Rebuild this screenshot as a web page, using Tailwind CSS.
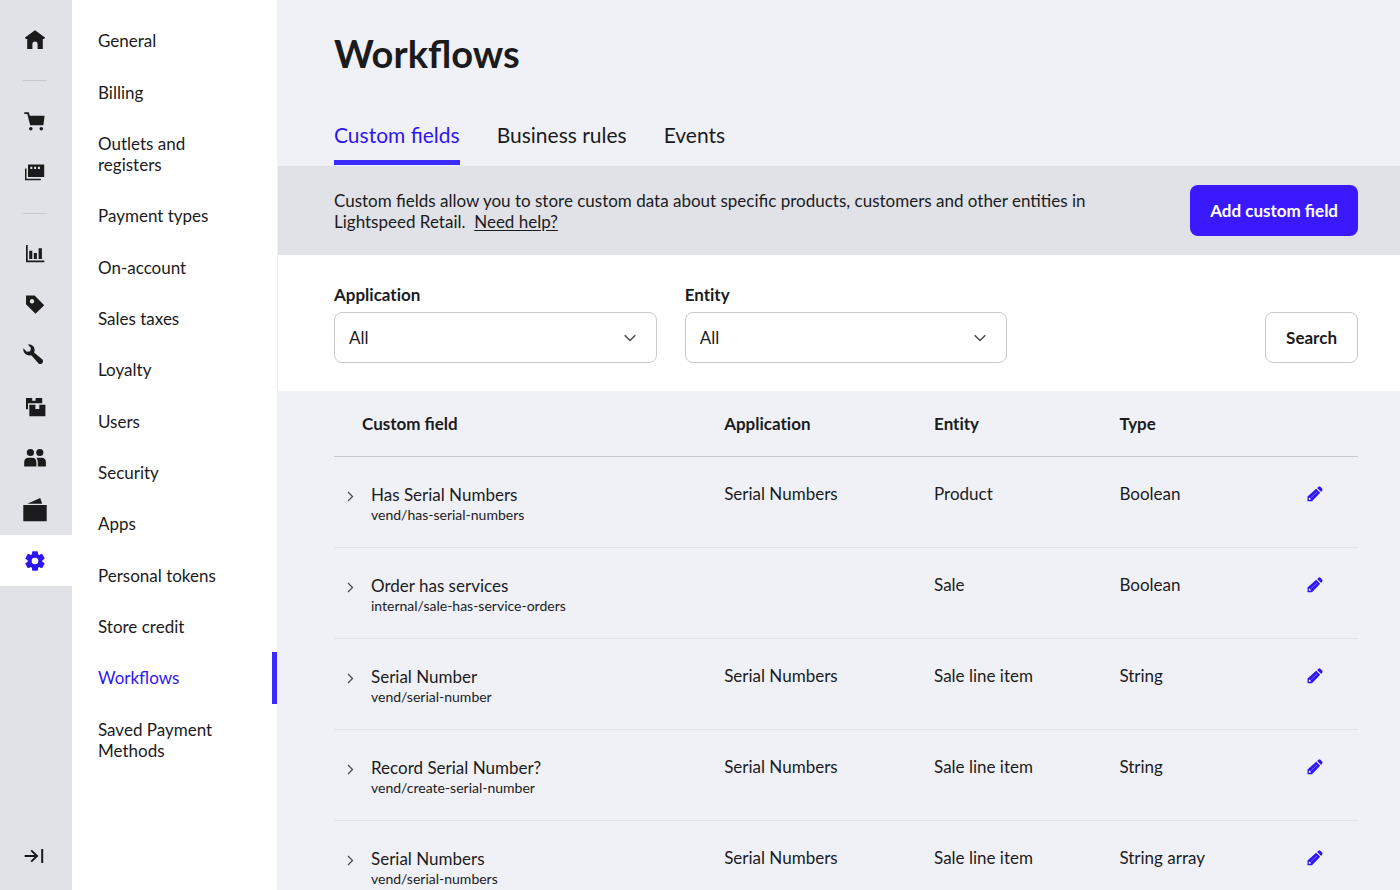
<!DOCTYPE html>
<html lang="en">
<head>
  <meta charset="utf-8"/>
  <meta name="viewport" content="width=device-width, initial-scale=1">
  <title>Workflows</title>
  <script src="https://cdn.jsdelivr.net/npm/@tailwindcss/browser@4"></script>
</head>
<body class="font-[Lato,sans-serif] text-[17px] leading-[21px] text-[#1b1b1d]">
  <!-- Shared icons -->
  <svg class="hidden">
    <symbol id="pencil" viewBox="0 0 16 16">
      <path fill="currentColor" fill-rule="evenodd" d="M.5 10.6 9.2 2.7 13.2 6.7 5 15.2H.5ZM1.8 12.3V13.8H3.3L4 13 2.6 11.6Z"/>
      <path fill="currentColor" d="M10.1 1.9 11.5.7Q12.5 0 13.4.8L15.1 2.4Q15.9 3.2 15.3 4.2L14.2 5.9Z"/>
      <path stroke="#f0f1f7" stroke-width=".4" d="M4 11.6 10 6"/>
    </symbol>
    <symbol id="right" viewBox="0 0 7 11">
      <path fill="none" stroke="currentColor" stroke-width="1.3" d="M1 1 5.5 5.5 1 10"/>
    </symbol>
    <symbol id="down" viewBox="0 0 12 8">
      <path fill="none" stroke="currentColor" stroke-width="1.5" d="M.7 1.2 6 6.5 11.3 1.2"/>
    </symbol>
  </svg>

  <div class="flex h-screen overflow-hidden">
    <!-- Icon rail -->
    <nav aria-label="Main" class="flex w-[72px] shrink-0 flex-col bg-[#e1e2e8] pt-[14px] pb-2">
      <a href="#" aria-label="Home" class="flex h-[51px] items-center pl-[23px]">
        <svg class="h-[25px] w-6" viewBox="0 0 24 25" fill="currentColor"><path d="M12 3.2 22 10.4 21.2 12.1H19.8V22H14.6V17.2a2.6 2.6 0 0 0-5.2 0V22H4.2V12.1H2.8L2 10.4Z"/></svg>
      </a>
      <div class="flex h-[31px] items-center pl-[23px]"><div class="h-px w-6 bg-[#c9cacf]"></div></div>
      <a href="#" aria-label="Sell" class="flex h-[51px] items-center pl-[23px]">
        <svg class="h-[25px] w-6" viewBox="0 0 24 25" fill="currentColor"><path d="M1.3 3.3H5.8L6.8 6.7H21.6L20.4 16.3H7.2L4.3 5.1H1.3Z"/><circle cx="7.8" cy="19.7" r="1.8"/><circle cx="18.3" cy="19.7" r="1.8"/></svg>
      </a>
      <a href="#" aria-label="Register" class="flex h-[51px] items-center pl-[23px]">
        <svg class="h-[25px] w-6" viewBox="0 0 24 25" fill="currentColor"><path fill-rule="evenodd" d="M5 4.6H21.2V17H5ZM7.3 6.8V8.9H9.3V6.8ZM11.1 6.8V8.9H13.1V6.8ZM14.9 6.8V8.9H16.9V6.8Z"/><path d="M2 8.5H3.5V18.7H17.8V20.2H2Z"/></svg>
      </a>
      <div class="flex h-[31px] items-center pl-[23px]"><div class="h-px w-6 bg-[#c9cacf]"></div></div>
      <a href="#" aria-label="Reporting" class="flex h-[51px] items-center pl-[23px]">
        <svg class="h-[25px] w-6" viewBox="0 0 24 25" fill="currentColor"><path d="M3 3H4.7V18.6H21.3V20.3H3ZM6.2 8.7H9.3V17H6.2ZM10.8 11H13.9V17H10.8ZM15.6 6.3H18.9V17H15.6Z"/></svg>
      </a>
      <a href="#" aria-label="Catalog" class="flex h-[51px] items-center pl-[23px]">
        <svg class="h-[25px] w-6" viewBox="0 0 24 25" fill="currentColor"><path fill-rule="evenodd" d="M3 2.5H11.6L21.2 12.2 12.5 20.8 3 11.2ZM9 6.1a2.2 2.2 0 1 0 .01 0Z"/></svg>
      </a>
      <a href="#" aria-label="Services" class="flex h-[51px] items-center pl-[23px]">
        <svg class="h-[25px] w-6" viewBox="0 0 24 25" fill="currentColor"><path d="M4.8.6C8.5-.4 12 2.4 11.6 6.4L11.1 8.4 19.7 15.8A2.9 2.9 0 0 1 15.8 19.7L8.3 11.2C4.2 12.4-.2 9.2.3 4.2L3.8 7.8 7.2 7.3 7.9 4Z"/></svg>
      </a>
      <a href="#" aria-label="Inventory" class="flex h-[51px] items-center pl-[23px]">
        <svg class="h-[25px] w-6" viewBox="0 0 24 25" fill="currentColor"><path d="M3 3H9.2V5.8H12.6V3H19.2V8.2H5V14.2H3ZM6.3 9.8H12.4V14H16.3V9.8H22.4V21.2H6.3Z"/></svg>
      </a>
      <a href="#" aria-label="Customers" class="flex h-[51px] items-center pl-[23px]">
        <svg class="h-[25px] w-6" viewBox="0 0 24 25" fill="currentColor"><circle cx="7.4" cy="6.5" r="3.6"/><circle cx="16.8" cy="6.5" r="3.6"/><path d="M1.2 20.5V16.4Q1.2 11.8 5.6 11.8H9.2Q13.4 11.8 13.4 16.4V20.5ZM13.4 11.8H18.6Q22.9 11.8 22.9 16.4V20.5H14.8V16Q14.8 13.4 13.4 11.8Z"/></svg>
      </a>
      <a href="#" aria-label="Payments" class="flex h-[51px] items-center pl-[23px]">
        <svg class="h-[25px] w-6" viewBox="0 0 24 25" fill="currentColor"><path d="M.3 8.1H23.7V24.2H.3ZM4.4 6.8 17.2 1 19.2 6.8Z"/></svg>
      </a>
      <a href="#" aria-label="Setup" class="flex h-[51px] items-center bg-white pl-[23px] text-[#2f16f0]">
        <svg class="h-[25px] w-6" viewBox="0 0 24 25" fill="currentColor"><circle cx="12" cy="13" r="7.4"/><rect x="9" y="3.2" width="6" height="19.6" rx="1.2"/><rect x="9" y="3.2" width="6" height="19.6" rx="1.2" transform="rotate(60 12 13)"/><rect x="9" y="3.2" width="6" height="19.6" rx="1.2" transform="rotate(120 12 13)"/><circle cx="12" cy="13" r="3.3" fill="#fff"/></svg>
      </a>
      <button type="button" aria-label="Expand menu" class="mt-auto flex h-[51px] items-center pl-[23px]">
        <svg class="h-[25px] w-6" viewBox="0 0 24 25" fill="none" stroke="currentColor" stroke-width="2"><path d="M1.6 12H14.4M8.2 6.4 14 12 8.2 17.6M19.2 5V19"/></svg>
      </button>
    </nav>

    <!-- Setup menu -->
    <nav aria-label="Setup" class="w-[206px] shrink-0 border-r border-[#f0f1f7] bg-white pt-[15px]">
      <ul class="flex min-h-[761px] flex-col *:flex *:grow *:items-center *:pl-[26px]">
        <li><a href="#">General</a></li>
        <li><a href="#">Billing</a></li>
        <li><a href="#">Outlets and<br>registers</a></li>
        <li><a href="#">Payment types</a></li>
        <li><a href="#">On-account</a></li>
        <li><a href="#">Sales taxes</a></li>
        <li><a href="#">Loyalty</a></li>
        <li><a href="#">Users</a></li>
        <li><a href="#">Security</a></li>
        <li><a href="#">Apps</a></li>
        <li><a href="#">Personal tokens</a></li>
        <li><a href="#">Store credit</a></li>
        <li class="border-r-5 border-[#3b2bff] text-[#2f16f0]"><a href="#" aria-current="page">Workflows</a></li>
        <li><a href="#">Saved Payment<br>Methods</a></li>
      </ul>
    </nav>

    <main class="min-w-0 grow overflow-y-auto bg-[#f0f1f7] [scrollbar-width:none]">
      <header class="pt-[29px] pr-[42px] pb-px pl-14">
        <h1 class="text-[38px] leading-[48px] font-bold">Workflows</h1>
        <div role="tablist" class="mt-[46px] flex gap-[37px] text-[21px] leading-6">
          <button type="button" role="tab" aria-selected="true" class="border-b-5 border-[#3b2bff] pb-[13px] text-[#2f16f0]">Custom fields</button>
          <button type="button" role="tab" aria-selected="false" class="border-b-5 border-transparent pb-[13px]">Business rules</button>
          <button type="button" role="tab" aria-selected="false" class="border-b-5 border-transparent pb-[13px]">Events</button>
        </div>
      </header>

      <section class="flex items-center justify-between bg-[#e1e2e8] py-[19px] pr-[42px] pl-14">
        <p class="max-w-[790px]">Custom fields allow you to store custom data about specific products, customers and other entities in Lightspeed Retail.&nbsp; <a href="#" class="underline underline-offset-2">Need help?</a></p>
        <button type="button" class="h-[51px] shrink-0 rounded-lg bg-[#3b19ff] px-5 font-bold text-white">Add custom field</button>
      </section>

      <form class="grid grid-cols-3 items-end gap-7 bg-white pt-[29px] pr-[42px] pb-7 pl-14">
        <div>
          <label for="application" class="block font-bold [font-variant-ligatures:none]">Application</label>
          <div class="relative mt-[7px]">
            <select id="application" class="block h-[51px] w-full appearance-none rounded-lg border border-[#c9cacf] bg-white px-[14px]">
              <option>All</option>
            </select>
            <svg class="pointer-events-none absolute top-[22px] right-[21px] h-2 w-3 text-[#4b4b50]"><use href="#down"/></svg>
          </div>
        </div>
        <div>
          <label for="entity" class="block font-bold [font-variant-ligatures:none]">Entity</label>
          <div class="relative mt-[7px]">
            <select id="entity" class="block h-[51px] w-full appearance-none rounded-lg border border-[#c9cacf] bg-white px-[14px]">
              <option>All</option>
            </select>
            <svg class="pointer-events-none absolute top-[22px] right-[21px] h-2 w-3 text-[#4b4b50]"><use href="#down"/></svg>
          </div>
        </div>
        <button type="button" class="h-[51px] justify-self-end rounded-lg border border-[#c9cacf] px-5 font-bold">Search</button>
      </form>

      <div class="pr-[42px] pl-14">
        <table class="w-full table-fixed text-left">
          <thead>
            <tr class="h-[65px] border-b border-[#c9cacf]">
              <th class="w-[38.1%] pl-7">Custom field</th>
              <th class="w-[20.5%] [font-variant-ligatures:none]">Application</th>
              <th class="w-[18.1%] [font-variant-ligatures:none]">Entity</th>
              <th>Type</th>
              <th class="w-[86px]"></th>
            </tr>
          </thead>
          <tbody id="rows"></tbody>
        </table>
      </div>
    </main>
  </div>

  <script>
    const fields = [
      ["Has Serial Numbers", "vend/has-serial-numbers", "Serial Numbers", "Product", "Boolean"],
      ["Order has services", "internal/sale-has-service-orders", "", "Sale", "Boolean"],
      ["Serial Number", "vend/serial-number", "Serial Numbers", "Sale line item", "String"],
      ["Record Serial Number?", "vend/create-serial-number", "Serial Numbers", "Sale line item", "String"],
      ["Serial Numbers", "vend/serial-numbers", "Serial Numbers", "Sale line item", "String array"],
    ];

    document.getElementById("rows").innerHTML = fields.map(([name, key, app, entity, type]) => `
      <tr class="h-[91px] border-b border-[#e1e2e8] align-top">
        <td class="pt-[27px]">
          <div class="flex">
            <button type="button" aria-label="Expand ${name}" class="flex h-[26px] w-[37px] shrink-0 items-center pl-[13px]">
              <svg class="h-[11px] w-[7px] text-[#4b4b50]"><use href="#right"/></svg>
            </button>
            <div>
              <div>${name}</div>
              <div class="text-[14px] leading-5">${key}</div>
            </div>
          </div>
        </td>
        <td class="pt-[26px]">${app}</td>
        <td class="pt-[26px]">${entity}</td>
        <td class="pt-[26px]">${type}</td>
        <td class="pt-[29px] pl-[35px]">
          <button type="button" aria-label="Edit ${name}" class="block text-[#2f16f0]">
            <svg class="size-4"><use href="#pencil"/></svg>
          </button>
        </td>
      </tr>
    `).join("");
  </script>
</body>
</html>
